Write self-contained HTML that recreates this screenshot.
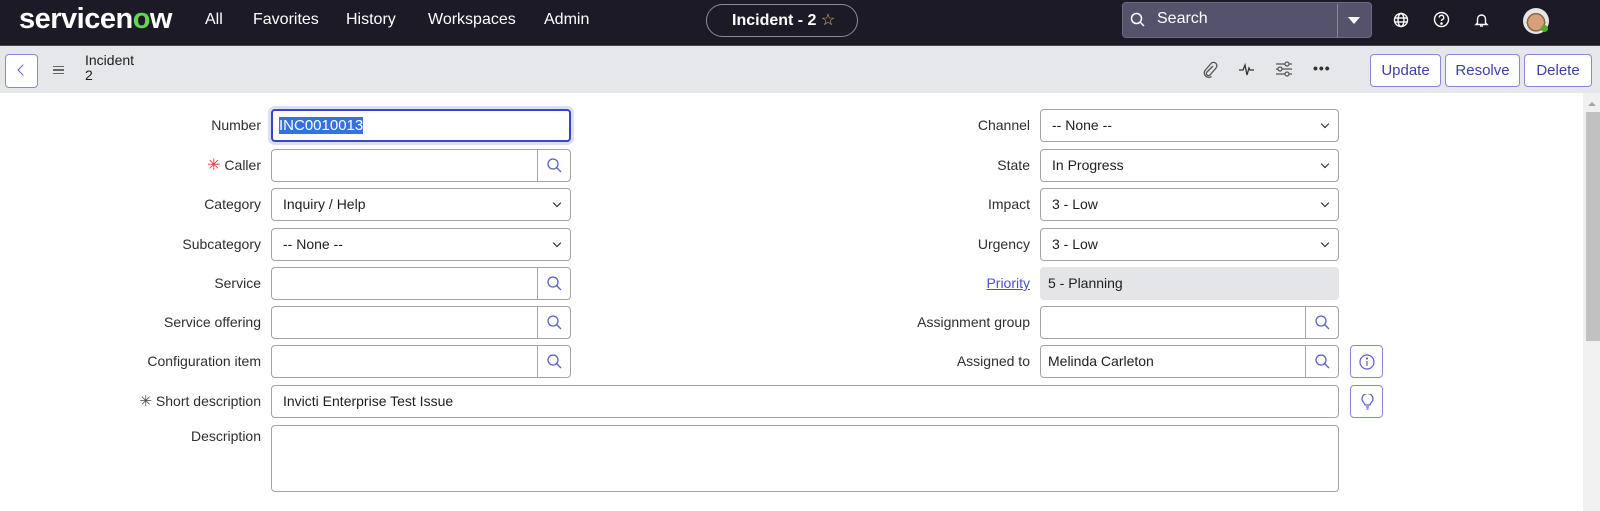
<!DOCTYPE html>
<html><head><meta charset="utf-8"><style>
*{box-sizing:border-box;margin:0;padding:0}
body{width:1600px;height:511px;overflow:hidden;background:#fff;font-family:"Liberation Sans",sans-serif;position:relative;color:#2e2e2e}
.a{position:absolute}
.nav{left:0;top:0;width:1600px;height:46px;background:#1b1a26;border-bottom:1px solid #44434e}
.nl{color:#fff;font-size:16px;top:11px}
.tb{left:0;top:46px;width:1600px;height:47px;background:#e6e7eb}
.btn{top:54px;height:33px;border:1px solid #8589d6;border-radius:4px;background:#fff;color:#3d3fa6;font-size:15px;text-align:center;line-height:31px}
.lbl{font-size:14px;color:#2e2e2e;text-align:right;width:250px;line-height:33px}
.inp{height:33px;border:1px solid #a3a4a8;border-radius:4px;background:#fff;font-size:14px;line-height:31px;padding-left:11px;color:#1e1e1e}
.sel::after{content:"";position:absolute;right:10px;top:11px;width:5px;height:5px;border-right:1.6px solid #222;border-bottom:1.6px solid #222;transform:rotate(45deg)}
.mag{position:absolute;right:0;top:0;width:33px;height:31px;border-left:1px solid #a3a4a8}
.ib{width:33px;height:33px;border:1px solid #8589d6;border-radius:4px;background:#fff}
</style></head><body>
<div class="a nav"></div>
<div class="a" style="left:19px;top:3px;color:#fff;font-size:29px;font-weight:bold;letter-spacing:-0.5px">servicen<span style="color:#62d84e">o</span>w</div>
<div class="a nl" style="left:205px">All</div>
<div class="a nl" style="left:253px">Favorites</div>
<div class="a nl" style="left:346px">History</div>
<div class="a nl" style="left:428px">Workspaces</div>
<div class="a nl" style="left:544px">Admin</div>
<div class="a" style="left:706px;top:4px;width:152px;height:33px;border:1px solid #8c8b95;border-radius:17px;color:#fff;font-size:16px;font-weight:bold;line-height:31px;padding-left:25px">Incident - 2 <span style="color:#e0c070;font-weight:normal">☆</span></div>
<div class="a" style="left:1122px;top:2px;width:250px;height:36px;background:#55536b;border:1px solid #6c6a80;border-radius:4px"></div>
<svg class="a" style="left:1130px;top:12px" width="16" height="16"><circle cx="6.5" cy="6.5" r="5" fill="none" stroke="#fff" stroke-width="1.5"/><line x1="10" y1="10" x2="14" y2="14" stroke="#fff" stroke-width="1.5"/></svg>
<div class="a" style="left:1157px;top:10px;color:#fff;font-size:16px">Search</div>
<div class="a" style="left:1337px;top:4px;width:1px;height:33px;background:#8a889c"></div>
<div class="a" style="left:1348px;top:17px;border-left:6px solid transparent;border-right:6px solid transparent;border-top:7px solid #fff"></div>
<svg class="a" style="left:1393px;top:12px" width="16" height="16" fill="none" stroke="#fff" stroke-width="1.4"><circle cx="8" cy="8" r="6.5"/><ellipse cx="8" cy="8" rx="3" ry="6.5"/><line x1="1.5" y1="6" x2="14.5" y2="6"/><line x1="1.5" y1="10" x2="14.5" y2="10"/></svg>
<svg class="a" style="left:1433px;top:11px" width="17" height="17" fill="none" stroke="#fff" stroke-width="1.4"><circle cx="8.5" cy="8.5" r="7"/><path d="M6.3 6.5a2.2 2.2 0 1 1 3 2c-.7.3-.8.7-.8 1.5"/><circle cx="8.5" cy="12.5" r=".6" fill="#fff"/></svg>
<svg class="a" style="left:1474px;top:12px" width="15" height="16" fill="none" stroke="#fff" stroke-width="1.4"><path d="M3.5 11V7a4 4 0 0 1 8 0v4l1.5 1.5H2z"/><path d="M6 14h3"/></svg>
<div class="a" style="left:1523px;top:8px;width:26px;height:26px;border-radius:50%;background:radial-gradient(circle at 50% 55%,#d9a07c 0 40%,#8a6a50 41% 48%,#e8e6e2 49%)"></div>
<div class="a" style="left:1541px;top:25px;width:7px;height:7px;border-radius:50%;background:#4caf2a"></div>

<div class="a tb"></div>
<div class="a" style="left:5px;top:54px;width:33px;height:34px;border:1px solid #8589d6;border-radius:4px;background:#fff"></div>
<div class="a" style="left:19px;top:66px;width:8px;height:8px;border-left:1px solid #5b5fc7;border-bottom:1px solid #5b5fc7;transform:rotate(45deg)"></div>
<div class="a" style="left:53px;top:66px;width:11px;height:8px;border-top:1.5px solid #666;border-bottom:1.5px solid #666"><div style="margin-top:2px;height:1.5px;background:#666"></div></div>
<div class="a" style="left:85px;top:53px;font-size:14px;line-height:15px;color:#1e1e1e">Incident<br>2</div>
<svg class="a" style="left:1202px;top:61px" width="16" height="18" fill="none" stroke="#555" stroke-width="1.3"><path d="M11 5 5 11a2 2 0 0 0 3 3l6-7a3.3 3.3 0 0 0-5-4.5L3 9.5a4.5 4.5 0 0 0 6.5 6"/></svg>
<svg class="a" style="left:1238px;top:62px" width="18" height="16" fill="none" stroke="#333" stroke-width="1.3"><path d="M1 8h4l2-5 2 10 2-7 1 2h4"/></svg>
<svg class="a" style="left:1275px;top:61px" width="18" height="16" fill="none" stroke="#555" stroke-width="1.2"><path d="M1 3h16M1 8h16M1 13h16"/><circle cx="12" cy="3" r="2" fill="#e6e7eb"/><circle cx="5" cy="8" r="2" fill="#e6e7eb"/><circle cx="12" cy="13" r="2" fill="#e6e7eb"/></svg>
<div class="a" style="left:1313px;top:60px;font-size:14px;font-weight:bold;color:#333;letter-spacing:1px">•••</div>
<div class="a btn" style="left:1370px;width:71px">Update</div>
<div class="a btn" style="left:1445px;width:75px">Resolve</div>
<div class="a btn" style="left:1524px;width:68px">Delete</div>

<div class="a" style="left:1583px;top:93px;width:17px;height:418px;background:#f0f0f0"></div>
<div class="a" style="left:1588px;top:102px;border-left:4px solid transparent;border-right:4px solid transparent;border-bottom:4px solid #a3a3a3"></div>
<div class="a" style="left:1586px;top:112px;width:14px;height:229px;background:#c1c1c1"></div>

<div class="a lbl" style="left:11px;top:109px">Number</div>
<div class="a inp" style="left:271px;top:109px;width:300px;border:2px solid #3a43c9;padding-left:6px;box-shadow:0 0 0 3px #dcdef3;line-height:29px"><span style="background:#3372e0;color:#fff;font-size:15px">INC0010013</span></div>
<div class="a lbl" style="left:11px;top:149px"><span style="color:#e3323a;font-size:16px">✳</span> Caller</div>
<div class="a inp" style="left:271px;top:149px;width:300px"><div class="mag"><svg style="position:absolute;left:9px;top:8px" width="15" height="15" fill="none" stroke="#5b5fc7" stroke-width="1.3"><circle cx="6" cy="6" r="5"/><line x1="9.5" y1="9.5" x2="14" y2="14"/></svg></div></div>
<div class="a lbl" style="left:11px;top:188px">Category</div>
<div class="a inp sel" style="left:271px;top:188px;width:300px">Inquiry / Help</div>
<div class="a lbl" style="left:11px;top:228px">Subcategory</div>
<div class="a inp sel" style="left:271px;top:228px;width:300px">-- None --</div>
<div class="a lbl" style="left:11px;top:267px">Service</div>
<div class="a inp" style="left:271px;top:267px;width:300px"><div class="mag"><svg style="position:absolute;left:9px;top:8px" width="15" height="15" fill="none" stroke="#5b5fc7" stroke-width="1.3"><circle cx="6" cy="6" r="5"/><line x1="9.5" y1="9.5" x2="14" y2="14"/></svg></div></div>
<div class="a lbl" style="left:11px;top:306px">Service offering</div>
<div class="a inp" style="left:271px;top:306px;width:300px"><div class="mag"><svg style="position:absolute;left:9px;top:8px" width="15" height="15" fill="none" stroke="#5b5fc7" stroke-width="1.3"><circle cx="6" cy="6" r="5"/><line x1="9.5" y1="9.5" x2="14" y2="14"/></svg></div></div>
<div class="a lbl" style="left:11px;top:345px">Configuration item</div>
<div class="a inp" style="left:271px;top:345px;width:300px"><div class="mag"><svg style="position:absolute;left:9px;top:8px" width="15" height="15" fill="none" stroke="#5b5fc7" stroke-width="1.3"><circle cx="6" cy="6" r="5"/><line x1="9.5" y1="9.5" x2="14" y2="14"/></svg></div></div>
<div class="a lbl" style="left:11px;top:385px"><span style="color:#444;font-size:15px">✳</span> Short description</div>
<div class="a inp" style="left:271px;top:385px;width:1068px">Invicti Enterprise Test Issue</div>
<div class="a lbl" style="left:11px;top:420px">Description</div>
<div class="a inp" style="left:271px;top:425px;width:1068px;height:67px"></div>

<div class="a lbl" style="left:780px;top:109px">Channel</div>
<div class="a inp sel" style="left:1040px;top:109px;width:299px">-- None --</div>
<div class="a lbl" style="left:780px;top:149px">State</div>
<div class="a inp sel" style="left:1040px;top:149px;width:299px">In Progress</div>
<div class="a lbl" style="left:780px;top:188px">Impact</div>
<div class="a inp sel" style="left:1040px;top:188px;width:299px">3 - Low</div>
<div class="a lbl" style="left:780px;top:228px">Urgency</div>
<div class="a inp sel" style="left:1040px;top:228px;width:299px">3 - Low</div>
<div class="a lbl" style="left:780px;top:267px"><span style="color:#4e52c5;text-decoration:underline">Priority</span></div>
<div class="a inp" style="left:1040px;top:267px;width:299px;background:#e4e5e8;border-color:#e4e5e8;padding-left:7px">5 - Planning</div>
<div class="a lbl" style="left:780px;top:306px">Assignment group</div>
<div class="a inp" style="left:1040px;top:306px;width:299px"><div class="mag"><svg style="position:absolute;left:9px;top:8px" width="15" height="15" fill="none" stroke="#5b5fc7" stroke-width="1.3"><circle cx="6" cy="6" r="5"/><line x1="9.5" y1="9.5" x2="14" y2="14"/></svg></div></div>
<div class="a lbl" style="left:780px;top:345px">Assigned to</div>
<div class="a inp" style="left:1040px;top:345px;width:299px;padding-left:7px">Melinda Carleton<div class="mag"><svg style="position:absolute;left:9px;top:8px" width="15" height="15" fill="none" stroke="#5b5fc7" stroke-width="1.3"><circle cx="6" cy="6" r="5"/><line x1="9.5" y1="9.5" x2="14" y2="14"/></svg></div></div>
<div class="a ib" style="left:1350px;top:345px"><svg style="position:absolute;left:8px;top:8px" width="16" height="16" fill="none" stroke="#5b5fc7" stroke-width="1.2"><circle cx="8" cy="8" r="7"/><line x1="8" y1="7" x2="8" y2="12"/><circle cx="8" cy="4.5" r=".5" fill="#5b5fc7"/></svg></div>
<div class="a ib" style="left:1350px;top:385px"><svg style="position:absolute;left:10px;top:8px" width="13" height="17" fill="none" stroke="#5b5fc7" stroke-width="1.2"><path d="M4 11c0-2-3-3-3-6a5.5 5.5 0 0 1 11 0c0 3-3 4-3 6z"/><path d="M5 13h3M5.5 15h2"/></svg></div>
</body></html>
